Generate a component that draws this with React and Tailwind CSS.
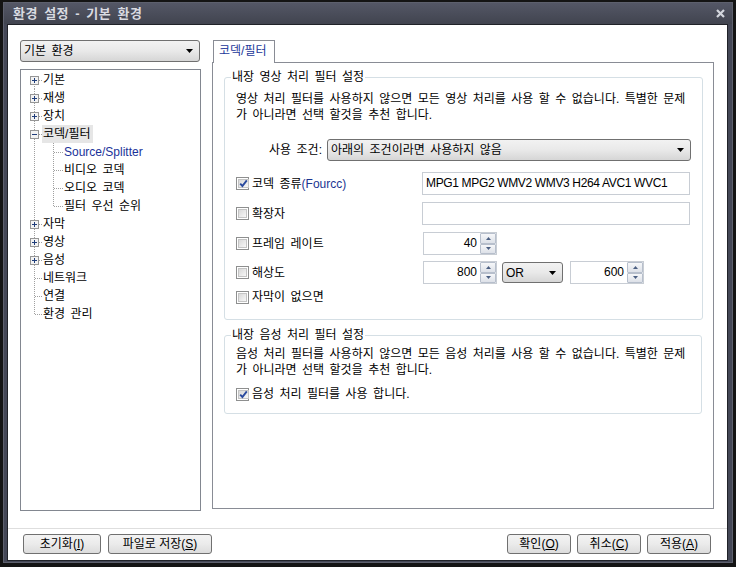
import React from 'react';

const FONT = "font-['Liberation_Sans','Noto_Sans_CJK_KR',sans-serif]";

const tree = [
  { t: '기본', box: '+' },
  { t: '재생', box: '+' },
  { t: '장치', box: '+' },
  { t: '코덱/필터', box: '-', sel: true },
  { t: 'Source/Splitter', sub: true, blue: true },
  { t: '비디오 코덱', sub: true },
  { t: '오디오 코덱', sub: true },
  { t: '필터 우선 순위', sub: true, lastSub: true },
  { t: '자막', box: '+' },
  { t: '영상', box: '+' },
  { t: '음성', box: '+' },
  { t: '네트워크' },
  { t: '연결' },
  { t: '환경 관리', last: true },
];

function Arrow() {
  return (
    <svg width="7" height="4" viewBox="0 0 7 4" className="shrink-0">
      <path d="M0 0 H7 L3.5 4 Z" fill="#000" />
    </svg>
  );
}

function Combo({ text, className }) {
  return (
    <div className={`flex items-center justify-between border border-[#707070] rounded-[3px] bg-gradient-to-b from-[#f2f2f2] via-[#e9e9e9] to-[#d6d6d6] pl-[3px] pr-[6px] text-[12px] text-black whitespace-nowrap ${className}`}>
      <span>{text}</span>
      <Arrow />
    </div>
  );
}

function Check({ checked }) {
  return (
    <span className="w-[13px] h-[13px] border border-[#8e8f8f] bg-white p-[1px] shrink-0 flex">
      <span className="flex-1 border border-[#c4c4c4] bg-gradient-to-br from-[#d9d9d9] to-[#f7f7f7] flex items-center justify-center">
        {checked && (
          <svg width="9" height="9" viewBox="0 0 9 9">
            <path d="M1.2 4.6 L3.4 7 L7.8 1.4" stroke="#2a4a9e" strokeWidth="1.9" fill="none" />
          </svg>
        )}
      </span>
    </span>
  );
}

function SpinBtn({ up }) {
  return (
    <div className="flex-1 flex items-center justify-center border border-[#b7bfcc] rounded-[1px] bg-gradient-to-b from-[#f6f7f9] to-[#dde1e8]">
      <svg width="5" height="3" viewBox="0 0 5 3">
        <path d={up ? 'M0 3 L2.5 0 L5 3 Z' : 'M0 0 L2.5 3 L5 0 Z'} fill="#4b5f82" />
      </svg>
    </div>
  );
}

function Spin({ value, className }) {
  return (
    <div className={`flex h-[23px] border border-[#c8cdd4] bg-white ${className}`}>
      <div className="flex-1 text-right pr-[3px] text-[12px] leading-[21px] text-black">{value}</div>
      <div className="w-[16px] flex flex-col">
        <SpinBtn up />
        <SpinBtn />
      </div>
    </div>
  );
}

function TreeRow({ item, first }) {
  const dot = { stroke: '#a0a0a0', strokeDasharray: '1 1', shapeRendering: 'crispEdges' };
  const w = item.sub ? 42 : 21;
  return (
    <div className="flex h-[18px] items-center">
      <svg width={w} height="18" viewBox={`0 0 ${w} 18`} className="shrink-0">
        <line x1="13.5" y1={first ? 9 : 0} x2="13.5" y2={item.last ? 9.5 : 18} style={dot} />
        {item.sub ? (
          <>
            <line x1="32.5" y1="0" x2="32.5" y2={item.lastSub ? 9.5 : 18} style={dot} />
            <line x1="33" y1="9.5" x2="42" y2="9.5" style={dot} />
          </>
        ) : (
          <line x1="14" y1="9.5" x2="21" y2="9.5" style={dot} />
        )}
        {item.box && (
          <g shapeRendering="crispEdges">
            <rect x="9.5" y="5.5" width="8" height="8" fill="#f3f3f3" stroke="#969696" />
            <line x1="11" y1="9.5" x2="16" y2="9.5" stroke="#1f3d7a" />
            {item.box === '+' && <line x1="13.5" y1="7" x2="13.5" y2="12" stroke="#1f3d7a" />}
          </g>
        )}
      </svg>
      <span
        className={`h-[18px] leading-[18px] pl-[1px] pr-[2px] text-[12px] whitespace-nowrap ${item.sel ? 'bg-[#e6e6e6]' : ''} ${item.blue ? 'text-[#1a3299]' : 'text-black'}`}
      >
        {item.t}
      </span>
    </div>
  );
}

function Btn({ label, hot, rest, className }) {
  return (
    <button className={`h-[20px] border border-[#707070] rounded-[3px] bg-gradient-to-b from-[#f3f3f3] via-[#ebebeb] to-[#dcdcdc] text-[12px] text-black flex items-center justify-center whitespace-nowrap ${className}`}>
      {label}(<span className="underline">{hot}</span>){rest}
    </button>
  );
}

export default function App() {
  return (
    <div className={`w-[736px] h-[567px] bg-[#141414] pl-[3px] pt-[2px] overflow-hidden [word-spacing:2.1px] ${FONT}`}>
      <div className="w-[730px] h-[561px] border border-[#5d606d] bg-[#444756] flex flex-col">
        {/* title bar */}
        <div className="h-[21px] flex items-center justify-between pl-[9px] pr-[7px] bg-gradient-to-b from-[#545766] to-[#41444f]">
          <span className="text-[13px] font-bold text-[#d9dbe1] tracking-[0.5px]">환경 설정 - 기본 환경</span>
          <svg width="9" height="9" viewBox="0 0 9 9">
            <path d="M1 1 L8 8 M8 1 L1 8" stroke="#d3d6dd" strokeWidth="2.2" />
          </svg>
        </div>

        <div className="pl-[3px] pr-[4px] pb-[1px]">
          <div className="w-[721px] h-[537px] border border-[#202228] bg-white flex flex-col">
            {/* main area */}
            <div className="h-[503px] flex pl-[12px] pt-[15px]">
              <div className="w-[181px] flex flex-col">
                <Combo text="기본 환경" className="w-[180px] h-[22px]" />
                <div className="mt-[7px] h-[442px] border border-[#828790] pt-[1px]">
                  {tree.map((item, i) => (
                    <TreeRow key={i} item={item} first={i === 0} />
                  ))}
                </div>
              </div>

              <div className="ml-[11px] w-[502px] flex flex-col">
                <div className="h-[22px] flex">
                  <div className="ml-[1px] w-[62px] h-[23px] -mb-[1px] relative z-10 border border-b-0 border-[#898c95] bg-white pl-[5px] text-[12px] leading-[21px] text-[#23389a]">
                    코덱/필터
                  </div>
                </div>
                <div className="h-[447px] border border-[#898c95] bg-white pl-[11px]">
                  {/* video group */}
                  <fieldset className="mt-[6px] w-[478px] h-[251px] border border-[#d5dfe5] rounded-[3px] px-[11px]">
                    <legend className="-ml-[5px] px-[1px] text-[12px] leading-[16px] text-black">내장 영상 처리 필터 설정</legend>
                    <p className="mt-[6px] text-[12px] leading-[16px] text-black whitespace-nowrap">
                      영상 처리 필터를 사용하지 않으면 모든 영상 처리를 사용 할 수 없습니다. 특별한 문제
                      <br />가 아니라면 선택 할것을 추천 합니다.
                    </p>
                    <div className="mt-[16px] flex items-center">
                      <span className="w-[86px] text-right text-[12px] text-black">사용 조건:</span>
                      <Combo text="아래의 조건이라면 사용하지 않음" className="ml-[5px] w-[364px] h-[22px]" />
                    </div>
                    <div className="mt-[11px] flex items-center h-[23px]">
                      <div className="w-[186px] flex items-center">
                        <Check checked />
                        <span className="ml-[3px] text-[12px] text-black">
                          코덱 종류<span className="text-[#1b3591]">(Fourcc)</span>
                        </span>
                      </div>
                      <div className="w-[268px] h-[23px] border border-[#c8cdd4] pl-[3px] text-[12px] leading-[21px] tracking-[-0.35px] [word-spacing:0px] text-black">
                        MPG1 MPG2 WMV2 WMV3 H264 AVC1 WVC1
                      </div>
                    </div>
                    <div className="mt-[7px] flex items-center h-[23px]">
                      <div className="w-[186px] flex items-center">
                        <Check />
                        <span className="ml-[3px] text-[12px] text-black">확장자</span>
                      </div>
                      <div className="w-[268px] h-[23px] border border-[#c8cdd4]" />
                    </div>
                    <div className="mt-[7px] flex items-center h-[23px]">
                      <div className="w-[186px] flex items-center">
                        <Check />
                        <span className="ml-[3px] text-[12px] text-black">프레임 레이트</span>
                      </div>
                      <Spin value="40" className="ml-[1px] w-[74px]" />
                    </div>
                    <div className="mt-[6px] flex items-center h-[23px]">
                      <div className="w-[186px] flex items-center">
                        <Check />
                        <span className="ml-[3px] text-[12px] text-black">해상도</span>
                      </div>
                      <Spin value="800" className="ml-[1px] w-[74px]" />
                      <Combo text="OR" className="ml-[5px] w-[61px] h-[21px]" />
                      <Spin value="600" className="ml-[7px] w-[74px]" />
                    </div>
                    <div className="mt-[6px] flex items-center h-[14px]">
                      <Check />
                      <span className="ml-[3px] text-[12px] text-black">자막이 없으면</span>
                    </div>
                  </fieldset>

                  {/* audio group */}
                  <fieldset className="mt-[7px] w-[478px] h-[87px] border border-[#d5dfe5] rounded-[3px] px-[11px]">
                    <legend className="-ml-[5px] px-[1px] text-[12px] leading-[16px] text-black">내장 음성 처리 필터 설정</legend>
                    <p className="mt-[3px] text-[12px] leading-[16px] text-black whitespace-nowrap">
                      음성 처리 필터를 사용하지 않으면 모든 음성 처리를 사용 할 수 없습니다. 특별한 문제
                      <br />가 아니라면 선택 할것을 추천 합니다.
                    </p>
                    <div className="mt-[8px] flex items-center h-[16px]">
                      <Check checked />
                      <span className="ml-[3px] text-[12px] text-black">음성 처리 필터를 사용 합니다.</span>
                    </div>
                  </fieldset>
                </div>
              </div>
            </div>

            {/* bottom buttons */}
            <div className="h-[32px] border-t border-[#dedede] flex items-start justify-between pt-[5px] pl-[15px] pr-[16px]">
              <div className="flex gap-[7px]">
                <Btn label="초기화" hot="I" className="w-[78px]" />
                <Btn label="파일로 저장" hot="S" className="w-[104px]" />
              </div>
              <div className="flex gap-[6px]">
                <Btn label="확인" hot="O" className="w-[64px]" />
                <Btn label="취소" hot="C" className="w-[64px]" />
                <Btn label="적용" hot="A" className="w-[64px]" />
              </div>
            </div>
          </div>
        </div>
      </div>
    </div>
  );
}
